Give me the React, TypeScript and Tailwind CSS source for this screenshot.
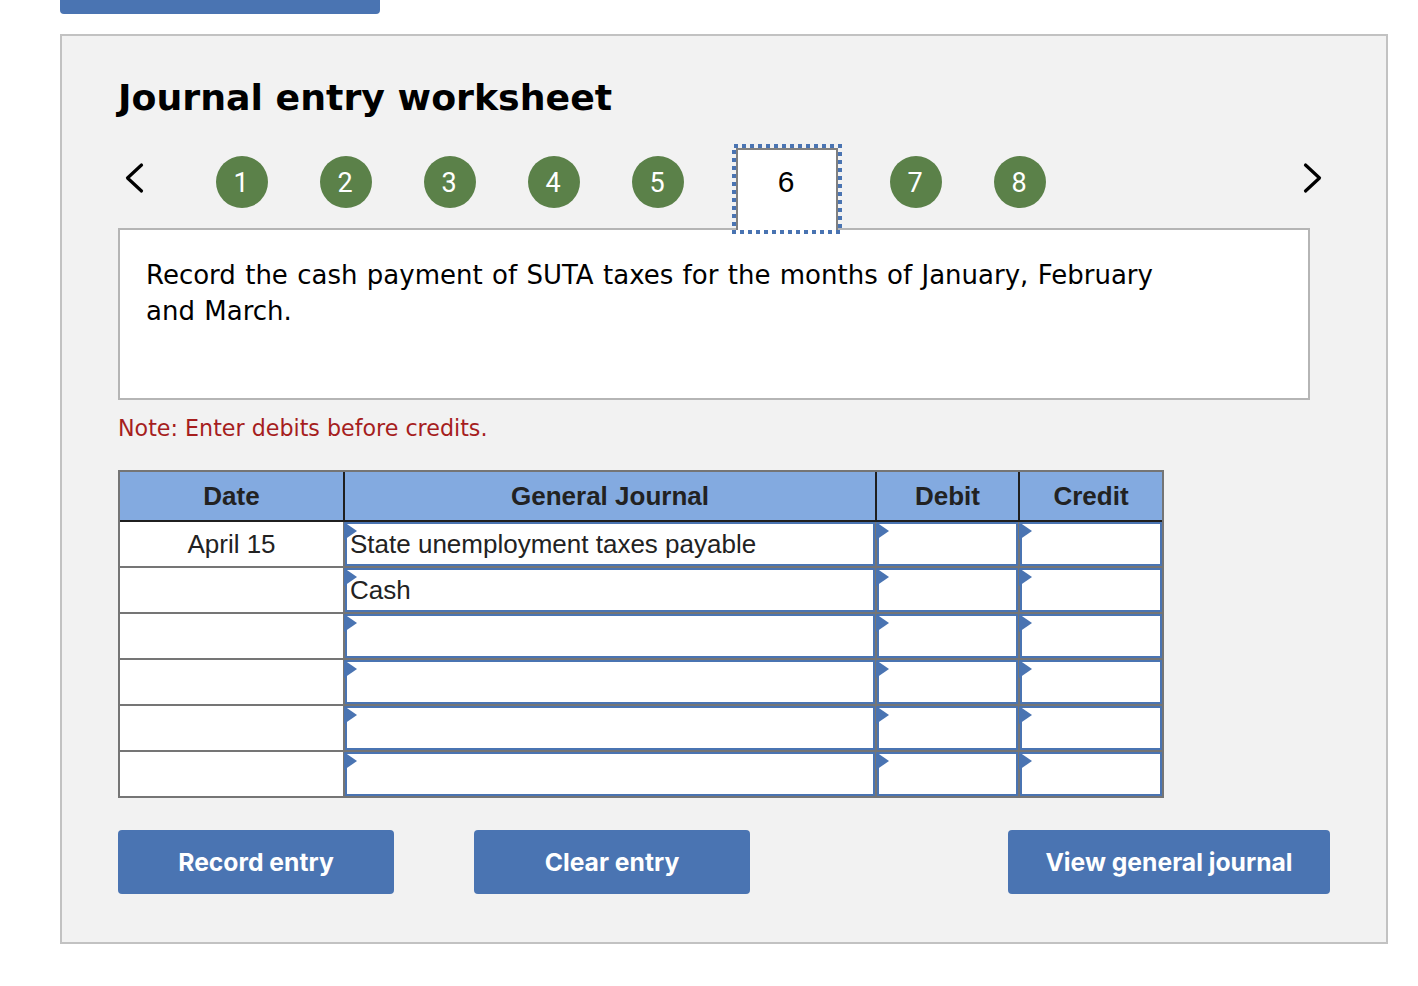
import React from "react";

const Chevron = ({ dir }: { dir: "l" | "r" }) => (
  <svg width="24" height="36" viewBox="0 0 24 36" fill="none" stroke="#000" strokeWidth="3.2" strokeLinecap="round" strokeLinejoin="round">
    <path d={dir === "l" ? "M19.5 5 L5.5 18 L19.5 31" : "M5.5 5 L19.5 18 L5.5 31"} />
  </svg>
);

const Step = ({ n }: { n: number }) => (
  <div className="w-[52px] h-[52px] mt-3 pt-[2px] pr-[2px] rounded-full bg-[#5b8149] text-white flex items-center justify-center text-[27px] font-['Roboto',sans-serif] shrink-0">
    {n}
  </div>
);

const Entry = ({ text, w, last }: { text?: string; w: string; last?: boolean }) => (
  <div className={`relative h-full ${w} ${last ? "" : "border-r-2 border-[#757575]"} shrink-0`}>
    <div className="h-full w-full bg-white border-2 border-[#4a74b2] pl-[3px] flex items-center text-[26px] text-[#222] whitespace-nowrap overflow-hidden">
      {text}
    </div>
    <svg className="absolute -left-px top-0" width="13" height="18" viewBox="0 0 13 18">
      <path d="M0 0 L13 9 L0 18 Z" fill="#4a74b2" />
    </svg>
  </div>
);

const Row = ({ date, text }: { date?: string; text?: string }) => (
  <div className="flex h-[46px] border-b-2 border-[#757575]">
    <div className="w-[225px] h-full border-r-2 border-[#757575] bg-white flex items-center justify-center text-[26px] text-[#222] shrink-0">
      {date}
    </div>
    <Entry text={text} w="w-[532px]" />
    <Entry w="w-[143px]" />
    <Entry w="w-[142px]" last />
  </div>
);

const Head = ({ label, w, last }: { label: string; w: string; last?: boolean }) => (
  <div className={`${w} h-full flex items-center justify-center font-bold text-[26px] text-[#222] shrink-0 ${last ? "" : "border-r-2 border-[#1f1f1f]"}`}>
    {label}
  </div>
);

const Btn = ({ label, w, cls }: { label: string; w: string; cls?: string }) => (
  <button className={`${w} ${cls ?? ""} h-16 pt-[2px] rounded bg-[#4a74b2] text-white font-['Inter',sans-serif] font-bold text-[24.7px]`}>
    {label}
  </button>
);

export default function App() {
  return (
    <div className="min-h-[986px] bg-white font-['Liberation_Sans',sans-serif]">
      <div className="ml-[60px] w-[320px] h-[14px] bg-[#4a74b2] rounded-b" />
      <div className="ml-[60px] mt-5 w-[1328px] h-[910px] border-2 border-[#c2c2c2] bg-[#f2f2f2] pl-[56px] flex flex-col">
        <h1 className="mt-[39px] h-[46px] leading-[46px] text-[36.3px] font-bold text-black font-['DejaVu_Sans',sans-serif]">
          Journal entry worksheet
        </h1>
        <div className="relative z-10 mt-[23px] -mb-[6px] flex h-[90px] w-[1212px] items-start">
          <div className="w-[98px] pt-[16px] pl-[4px] shrink-0"><Chevron dir="l" /></div>
          <div className="flex gap-[52px]">
            {[1, 2, 3, 4, 5].map((n) => <Step key={n} n={n} />)}
          </div>
          <div className="relative ml-12 w-[110px] h-[90px] p-[4px] shrink-0">
            <div className="h-full border-x-2 border-t-2 border-[#808080] bg-white flex items-center justify-center text-[30px] text-black pb-[18px] pr-[2px]">
              6
            </div>
            <svg className="absolute inset-0" width="110" height="90" viewBox="0 0 110 90" fill="none" stroke="#4a74b2" strokeWidth="4" strokeDasharray="4 4">
              <rect x="2" y="2" width="106" height="86" />
            </svg>
          </div>
          <div className="ml-12 flex gap-[52px]">
            {[7, 8].map((n) => <Step key={n} n={n} />)}
          </div>
          <div className="ml-auto mr-[6px] pt-[16px]"><Chevron dir="r" /></div>
        </div>
        <div className="w-[1192px] h-[172px] border-2 border-[#b5b5b5] bg-white pl-[26px] pt-[27px] pr-[140px] text-[26px] leading-9 [word-spacing:1.1px] text-black font-['DejaVu_Sans',sans-serif]">
          Record the cash payment of SUTA taxes for the months of January, February and March.
        </div>
        <p className="mt-4 h-[26px] leading-[24px] text-[22.2px] text-[#a61e1e] font-['DejaVu_Sans',sans-serif]">
          Note: Enter debits before credits.
        </p>
        <div className="mt-[28px] w-[1046px] border-2 border-[#757575]">
          <div className="flex h-[50px] bg-[#83aae0] border-b-2 border-[#1f1f1f]">
            <Head label="Date" w="w-[225px]" />
            <Head label="General Journal" w="w-[532px]" />
            <Head label="Debit" w="w-[143px]" />
            <Head label="Credit" w="w-[142px]" last />
          </div>
          <Row date="April 15" text="State unemployment taxes payable" />
          <Row text="Cash" />
          <Row />
          <Row />
          <Row />
          <div className="flex h-[44px]">
            <div className="w-[225px] h-full border-r-2 border-[#757575] bg-white shrink-0" />
            <Entry w="w-[532px]" />
            <Entry w="w-[143px]" />
            <Entry w="w-[142px]" last />
          </div>
        </div>
        <div className="mt-8 flex w-[1212px]">
          <Btn label="Record entry" w="w-[276px]" />
          <Btn label="Clear entry" w="w-[276px]" cls="ml-20" />
          <Btn label="View general journal" w="w-[322px]" cls="ml-auto" />
        </div>
      </div>
    </div>
  );
}
